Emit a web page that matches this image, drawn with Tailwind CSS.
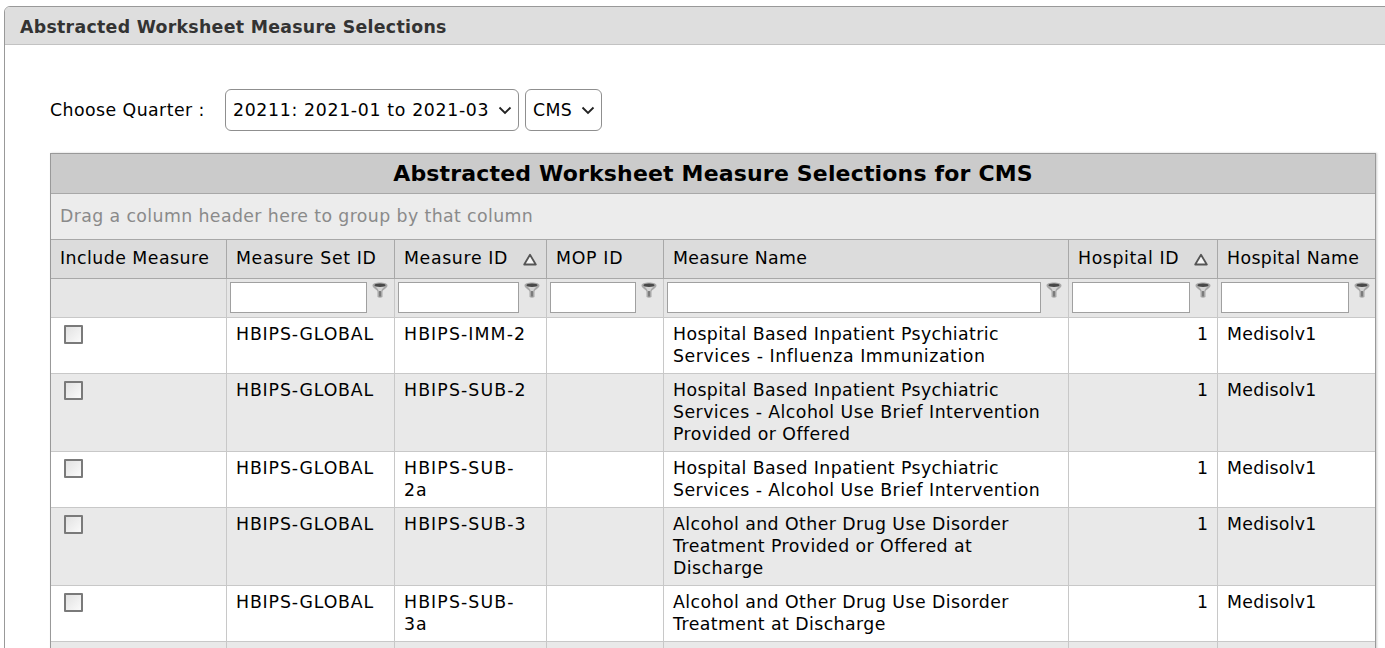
<!DOCTYPE html>
<html><head><meta charset="utf-8"><script src="https://cdn.jsdelivr.net/npm/@tailwindcss/browser@4"></script></head>
<body class="bg-white overflow-hidden h-[648px] font-['DejaVu_Sans',Verdana,sans-serif] text-black">
<svg width="0" height="0" class="absolute"><defs>
<g id="f"><path d="M8 .5C12.500 .5 15.500 1.500 15.500 3.500 15.500 6 11 7.500 10.500 9.500V15Q8 16.500 5.500 15V9.500C5 7.500 .5 6 .5 3.500 .5 1.500 3.500 .5 8 .5Z" fill="#a8a8a8"/><path d="M3 4C5 6 6.500 7.500 6.800 9.500H9.200C9.500 7.500 11 6 13 4Z" fill="#d4d4d4"/><ellipse cx="8" cy="3.300" rx="5.500" ry="1.700" fill="#484848"/><path d="M7.200 9h1.600v5.500H7.200z" fill="#707070"/></g>
<g id="s"><path d="M7 1.800L12.800 11.500H1.200Z" fill="#f4f4f4" stroke="#555" stroke-width="1.8" stroke-linejoin="round"/></g>
</defs></svg>
<div class="pt-[6px] pl-1 w-[1400px]">
 <div class="border border-[#999] rounded-t-[6px] h-[700px] w-[1395px]">
  <div class="h-[38px] bg-[#dedede] border-b border-[#c2c2c2] rounded-t-[5px] pl-[15px] pt-[4px] flex items-center text-[17.33px] font-bold text-[#333] tracking-[.3px]">Abstracted Worksheet Measure Selections</div>
  <div class="pl-[45px] pt-[44px]">
   <div class="flex items-center h-[42px] text-[17.33px]">
    <span class="w-[175px] tracking-[.44px] pt-[1px]">Choose Quarter :</span>
    <div class="w-[294px] h-[42px] border border-[#8f8f8f] rounded-[6px] flex items-center justify-between pl-[7px] pr-[6px]"><span class="tracking-[.66px] pt-[1px]">20211: 2021-01 to 2021-03</span><svg width="14" height="9" viewBox="0 0 14 9" fill="none" stroke="#222" stroke-width="1.800"><path d="M1.500 1.500l5.500 5.500 5.500-5.500"/></svg></div>
    <div class="ml-[6px] w-[77px] h-[42px] border border-[#8f8f8f] rounded-[6px] flex items-center justify-between pl-[7px] pr-[6px]"><span class="tracking-[.3px] pt-[1px]">CMS</span><svg width="14" height="9" viewBox="0 0 14 9" fill="none" stroke="#222" stroke-width="1.800"><path d="M1.500 1.500l5.500 5.500 5.500-5.500"/></svg></div>
   </div>
   <div class="mt-[22px] w-[1326px] border-x border-t border-[#999] shadow-[1px_0_2px_#ccc]">
    <div class="h-[40px] bg-[#cbcbcb] border-b border-[#a8a8a8] flex items-center justify-center text-[22px] font-bold leading-none tracking-[.17px]">Abstracted Worksheet Measure Selections for CMS</div>
    <div class="h-[46px] bg-[#ececec] border-b border-[#a8a8a8] flex items-center pl-[9px] text-[17.33px] text-[#8a8a8a] tracking-[.39px]">Drag a column header here to group by that column</div>
    <div class="grid grid-cols-[176px_168px_152px_117px_405px_149px_157px] text-[17.33px]">
     <!-- header -->
     <div class="h-[39px] bg-[#dcdcdc] border-b border-r border-[#a8a8a8] pl-[9px] flex items-center tracking-[.47px]">Include Measure</div>
     <div class="h-[39px] bg-[#dcdcdc] border-b border-r border-[#a8a8a8] pl-[9px] flex items-center tracking-[.64px]">Measure Set ID</div>
     <div class="h-[39px] bg-[#dcdcdc] border-b border-r border-[#a8a8a8] pl-[9px] flex items-center justify-between pr-[9px] tracking-[.65px]">Measure ID<svg width="14" height="13" viewBox="0 0 14 13"><use href="#s"/></svg></div>
     <div class="h-[39px] bg-[#dcdcdc] border-b border-r border-[#a8a8a8] pl-[9px] flex items-center tracking-[.7px]">MOP ID</div>
     <div class="h-[39px] bg-[#dcdcdc] border-b border-r border-[#a8a8a8] pl-[9px] flex items-center tracking-[.33px]">Measure Name</div>
     <div class="h-[39px] bg-[#dcdcdc] border-b border-r border-[#a8a8a8] pl-[9px] flex items-center justify-between pr-[9px] tracking-[.6px]">Hospital ID<svg width="14" height="13" viewBox="0 0 14 13"><use href="#s"/></svg></div>
     <div class="h-[39px] bg-[#dcdcdc] border-b border-[#a8a8a8] pl-[9px] flex items-center tracking-[.38px]">Hospital Name</div>
     <!-- filter -->
     <div class="h-[39px] bg-[#e6e6e6] border-b border-r border-[#c8c8c8]"></div>
     <div class="h-[39px] bg-[#e6e6e6] border-b border-r border-[#c8c8c8] pl-[3px] pt-[3px] flex gap-[5px]"><div class="w-[137px] h-[31px] bg-white border border-[#a0a0a0]"></div><svg width="16" height="17" viewBox="0 0 16 17"><use href="#f"/></svg></div>
     <div class="h-[39px] bg-[#e6e6e6] border-b border-r border-[#c8c8c8] pl-[3px] pt-[3px] flex gap-[5px]"><div class="w-[121px] h-[31px] bg-white border border-[#a0a0a0]"></div><svg width="16" height="17" viewBox="0 0 16 17"><use href="#f"/></svg></div>
     <div class="h-[39px] bg-[#e6e6e6] border-b border-r border-[#c8c8c8] pl-[3px] pt-[3px] flex gap-[5px]"><div class="w-[86px] h-[31px] bg-white border border-[#a0a0a0]"></div><svg width="16" height="17" viewBox="0 0 16 17"><use href="#f"/></svg></div>
     <div class="h-[39px] bg-[#e6e6e6] border-b border-r border-[#c8c8c8] pl-[3px] pt-[3px] flex gap-[5px]"><div class="w-[374px] h-[31px] bg-white border border-[#a0a0a0]"></div><svg width="16" height="17" viewBox="0 0 16 17"><use href="#f"/></svg></div>
     <div class="h-[39px] bg-[#e6e6e6] border-b border-r border-[#c8c8c8] pl-[3px] pt-[3px] flex gap-[5px]"><div class="w-[118px] h-[31px] bg-white border border-[#a0a0a0]"></div><svg width="16" height="17" viewBox="0 0 16 17"><use href="#f"/></svg></div>
     <div class="h-[39px] bg-[#e6e6e6] border-b border-[#c8c8c8] pl-[3px] pt-[3px] flex gap-[5px]"><div class="w-[128px] h-[31px] bg-white border border-[#a0a0a0]"></div><svg width="16" height="17" viewBox="0 0 16 17"><use href="#f"/></svg></div>
     <!-- row 1 -->
     <div class="h-[56px] bg-white border-b border-r border-[#c8c8c8] pl-[13px] pt-[7px]"><div class="w-[19px] h-[19px] border-2 border-[#7a7a7a] rounded-[1px] bg-gradient-to-br from-[#e2e2e2] to-[#fafafa]"></div></div>
     <div class="bg-white border-b border-r border-[#c8c8c8] px-[9px] pt-[5px] leading-[22px] tracking-[.85px]">HBIPS-GLOBAL</div>
     <div class="bg-white border-b border-r border-[#c8c8c8] px-[9px] pt-[5px] leading-[22px] tracking-[1.1px]">HBIPS-IMM-2</div>
     <div class="bg-white border-b border-r border-[#c8c8c8]"></div>
     <div class="bg-white border-b border-r border-[#c8c8c8] px-[9px] pt-[5px] leading-[22px]"><div class="tracking-[.39px]">Hospital Based Inpatient Psychiatric</div><div class="tracking-[.57px]">Services - Influenza Immunization</div></div>
     <div class="bg-white border-b border-r border-[#c8c8c8] px-[9px] pt-[5px] leading-[22px] text-right">1</div>
     <div class="bg-white border-b border-[#c8c8c8] px-[9px] pt-[5px] leading-[22px] tracking-[.27px]">Medisolv1</div>
     <!-- row 2 -->
     <div class="h-[78px] bg-[#e9e9e9] border-b border-r border-[#c8c8c8] pl-[13px] pt-[7px]"><div class="w-[19px] h-[19px] border-2 border-[#7a7a7a] rounded-[1px] bg-gradient-to-br from-[#e2e2e2] to-[#fafafa]"></div></div>
     <div class="bg-[#e9e9e9] border-b border-r border-[#c8c8c8] px-[9px] pt-[5px] leading-[22px] tracking-[.85px]">HBIPS-GLOBAL</div>
     <div class="bg-[#e9e9e9] border-b border-r border-[#c8c8c8] px-[9px] pt-[5px] leading-[22px] tracking-[1.1px]">HBIPS-SUB-2</div>
     <div class="bg-[#e9e9e9] border-b border-r border-[#c8c8c8]"></div>
     <div class="bg-[#e9e9e9] border-b border-r border-[#c8c8c8] px-[9px] pt-[5px] leading-[22px]"><div class="tracking-[.39px]">Hospital Based Inpatient Psychiatric</div><div class="tracking-[.45px]">Services - Alcohol Use Brief Intervention</div><div class="tracking-[.45px]">Provided or Offered</div></div>
     <div class="bg-[#e9e9e9] border-b border-r border-[#c8c8c8] px-[9px] pt-[5px] leading-[22px] text-right">1</div>
     <div class="bg-[#e9e9e9] border-b border-[#c8c8c8] px-[9px] pt-[5px] leading-[22px] tracking-[.27px]">Medisolv1</div>
     <!-- row 3 -->
     <div class="h-[56px] bg-white border-b border-r border-[#c8c8c8] pl-[13px] pt-[7px]"><div class="w-[19px] h-[19px] border-2 border-[#7a7a7a] rounded-[1px] bg-gradient-to-br from-[#e2e2e2] to-[#fafafa]"></div></div>
     <div class="bg-white border-b border-r border-[#c8c8c8] px-[9px] pt-[5px] leading-[22px] tracking-[.85px]">HBIPS-GLOBAL</div>
     <div class="bg-white border-b border-r border-[#c8c8c8] px-[9px] pt-[5px] leading-[22px] tracking-[1.1px]">HBIPS-SUB-<br>2a</div>
     <div class="bg-white border-b border-r border-[#c8c8c8]"></div>
     <div class="bg-white border-b border-r border-[#c8c8c8] px-[9px] pt-[5px] leading-[22px]"><div class="tracking-[.39px]">Hospital Based Inpatient Psychiatric</div><div class="tracking-[.45px]">Services - Alcohol Use Brief Intervention</div></div>
     <div class="bg-white border-b border-r border-[#c8c8c8] px-[9px] pt-[5px] leading-[22px] text-right">1</div>
     <div class="bg-white border-b border-[#c8c8c8] px-[9px] pt-[5px] leading-[22px] tracking-[.27px]">Medisolv1</div>
     <!-- row 4 -->
     <div class="h-[78px] bg-[#e9e9e9] border-b border-r border-[#c8c8c8] pl-[13px] pt-[7px]"><div class="w-[19px] h-[19px] border-2 border-[#7a7a7a] rounded-[1px] bg-gradient-to-br from-[#e2e2e2] to-[#fafafa]"></div></div>
     <div class="bg-[#e9e9e9] border-b border-r border-[#c8c8c8] px-[9px] pt-[5px] leading-[22px] tracking-[.85px]">HBIPS-GLOBAL</div>
     <div class="bg-[#e9e9e9] border-b border-r border-[#c8c8c8] px-[9px] pt-[5px] leading-[22px] tracking-[1.1px]">HBIPS-SUB-3</div>
     <div class="bg-[#e9e9e9] border-b border-r border-[#c8c8c8]"></div>
     <div class="bg-[#e9e9e9] border-b border-r border-[#c8c8c8] px-[9px] pt-[5px] leading-[22px] tracking-[.43px]">Alcohol and Other Drug Use Disorder<br>Treatment Provided or Offered at<br>Discharge</div>
     <div class="bg-[#e9e9e9] border-b border-r border-[#c8c8c8] px-[9px] pt-[5px] leading-[22px] text-right">1</div>
     <div class="bg-[#e9e9e9] border-b border-[#c8c8c8] px-[9px] pt-[5px] leading-[22px] tracking-[.27px]">Medisolv1</div>
     <!-- row 5 -->
     <div class="h-[56px] bg-white border-b border-r border-[#c8c8c8] pl-[13px] pt-[7px]"><div class="w-[19px] h-[19px] border-2 border-[#7a7a7a] rounded-[1px] bg-gradient-to-br from-[#e2e2e2] to-[#fafafa]"></div></div>
     <div class="bg-white border-b border-r border-[#c8c8c8] px-[9px] pt-[5px] leading-[22px] tracking-[.85px]">HBIPS-GLOBAL</div>
     <div class="bg-white border-b border-r border-[#c8c8c8] px-[9px] pt-[5px] leading-[22px] tracking-[1.1px]">HBIPS-SUB-<br>3a</div>
     <div class="bg-white border-b border-r border-[#c8c8c8]"></div>
     <div class="bg-white border-b border-r border-[#c8c8c8] px-[9px] pt-[5px] leading-[22px] tracking-[.43px]">Alcohol and Other Drug Use Disorder<br>Treatment at Discharge</div>
     <div class="bg-white border-b border-r border-[#c8c8c8] px-[9px] pt-[5px] leading-[22px] text-right">1</div>
     <div class="bg-white border-b border-[#c8c8c8] px-[9px] pt-[5px] leading-[22px] tracking-[.27px]">Medisolv1</div>
     <!-- row 6 stub -->
     <div class="h-[40px] bg-[#e9e9e9] border-r border-[#c8c8c8]"></div>
     <div class="bg-[#e9e9e9] border-r border-[#c8c8c8]"></div>
     <div class="bg-[#e9e9e9] border-r border-[#c8c8c8]"></div>
     <div class="bg-[#e9e9e9] border-r border-[#c8c8c8]"></div>
     <div class="bg-[#e9e9e9] border-r border-[#c8c8c8]"></div>
     <div class="bg-[#e9e9e9] border-r border-[#c8c8c8]"></div>
     <div class="bg-[#e9e9e9]"></div>
    </div>
   </div>
  </div>
 </div>
</div>
</body></html>
